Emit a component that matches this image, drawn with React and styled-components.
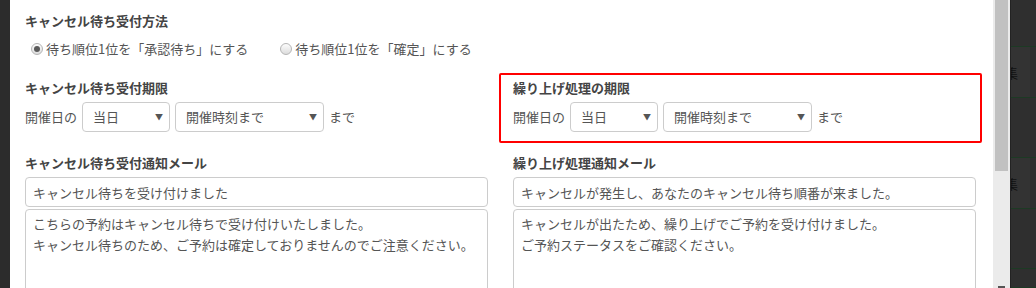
import styled, { createGlobalStyle } from 'styled-components';

const GlobalStyle = createGlobalStyle`
  html, body { margin: 0; padding: 0; background: #2f2f2f; overflow: hidden; }
  * { box-sizing: border-box; }
`;

const FONT = `"Noto Sans CJK JP", "Noto Sans", sans-serif`;

function Radio({ checked, label }) {
  return (
    <RadioItem>
      <RadioDot checked={checked} />
      <span>{label}</span>
    </RadioItem>
  );
}

function Select({ value, width }) {
  return (
    <SelectBox width={width}>
      <span>{value}</span>
      <Caret>▼</Caret>
    </SelectBox>
  );
}

function DeadlineRow() {
  return (
    <InlineRow>
      <span>開催日の</span>
      <Select value="当日" width={88} />
      <Select value="開催時刻まで" width={149} />
      <span>まで</span>
    </InlineRow>
  );
}

function App() {
  return (
    <>
      <GlobalStyle />
      <Screen>
        <LeftEdge />
        <Modal>
          <Heading>キャンセル待ち受付方法</Heading>
          <RadioGroup>
            <Radio checked label="待ち順位1位を「承認待ち」にする" />
            <Radio label="待ち順位1位を「確定」にする" />
          </RadioGroup>

          <FormGrid>
            <Field>
              <Heading>キャンセル待ち受付期限</Heading>
              <DeadlineRow />
            </Field>
            <Field highlight>
              <Highlight />
              <Heading>繰り上げ処理の期限</Heading>
              <DeadlineRow />
            </Field>

            <Field>
              <Heading>キャンセル待ち受付通知メール</Heading>
              <TextInput>キャンセル待ちを受け付けました</TextInput>
              <TextArea>
                こちらの予約はキャンセル待ちで受け付けいたしました。
                <br />
                キャンセル待ちのため、ご予約は確定しておりませんのでご注意ください。
              </TextArea>
            </Field>
            <Field>
              <Heading>繰り上げ処理通知メール</Heading>
              <TextInput>キャンセルが発生し、あなたのキャンセル待ち順番が来ました。</TextInput>
              <TextArea>
                キャンセルが出たため、繰り上げでご予約を受け付けました。
                <br />
                ご予約ステータスをご確認ください。
              </TextArea>
            </Field>
          </FormGrid>
        </Modal>

        <ScrollTrack>
          <ScrollThumb />
          <ScrollArrow />
        </ScrollTrack>

        <BackPage>
          <BackRow h={47} />
          <BackRow h={51} cell>
            <BackGlyph>集</BackGlyph>
          </BackRow>
          <BackRow h={60} />
          <BackRow h={51} cell>
            <BackGlyph>集</BackGlyph>
          </BackRow>
          <BackRow h={60} />
          <BackRow h={19} />
        </BackPage>
      </Screen>
    </>
  );
}

// --- styled-components ---

const Screen = styled.div`
  display: flex;
  width: 1036px; height: 288px;
  overflow: hidden;
  font-family: ${FONT};
`;

const LeftEdge = styled.div`
  width: 10px; flex-shrink: 0;
  background: #2c2c2c;
`;

const Modal = styled.div`
  width: 983px; flex-shrink: 0;
  background: #fff;
  padding: 12px 17px 0 15px;
  color: #555;
  font-size: 13px;
`;

const Heading = styled.div`
  font-size: 13px; line-height: 18px;
  font-weight: bold;
  color: #444;
`;

const RadioGroup = styled.div`
  display: flex; align-items: center;
  gap: 32px;
  margin-top: 9px;
  padding-left: 6px;
  line-height: 20px;
`;

const RadioItem = styled.label`
  display: flex; align-items: center;
  gap: 3px;
`;

const RadioDot = styled.span`
  position: relative;
  width: 12px; height: 12px;
  border-radius: 50%;
  border: 1px solid #b5b5b5;
  background: linear-gradient(#fdfdfd, #dcdcdc);
  &::after {
    content: '';
    display: ${(p) => (p.checked ? 'block' : 'none')};
    position: absolute; left: 2px; top: 2px;
    width: 6px; height: 6px; border-radius: 50%;
    background: #5a5a5a;
  }
`;

const FormGrid = styled.div`
  display: grid;
  grid-template-columns: 463px 463px;
  column-gap: 25px;
  row-gap: 22px;
  margin-top: 20px;
`;

const Field = styled.div`
  position: relative;
  display: flex; flex-direction: column;
  min-width: 0;
`;

const Highlight = styled.div`
  position: absolute;
  top: -6px; left: -14px; right: -6px; bottom: -11px;
  border: 2px solid #f00;
  border-radius: 2px;
  pointer-events: none;
`;

const InlineRow = styled.div`
  display: flex; align-items: center;
  gap: 5px;
  margin-top: 5px;
  line-height: 20px;
`;

const SelectBox = styled.div`
  display: flex; align-items: center; justify-content: space-between;
  width: ${(p) => p.width}px; height: 30px;
  padding: 0 6px 0 10px;
  border: 1px solid #ccc; border-radius: 4px;
  background: #fff;
  color: #555;
`;

const Caret = styled.span`
  font-size: 8px; color: #555;
  line-height: 1;
`;

const TextInput = styled.div`
  height: 30px;
  margin-top: 5px;
  padding: 0 7px;
  display: flex; align-items: center;
  border: 1px solid #ccc; border-radius: 4px;
  white-space: nowrap; overflow: hidden;
`;

const TextArea = styled.div`
  height: 110px;
  margin-top: 2px;
  padding: 3px 7px;
  border: 1px solid #ccc; border-radius: 4px;
  line-height: 21px;
  white-space: nowrap;
`;

const ScrollTrack = styled.div`
  width: 17px; flex-shrink: 0;
  display: flex; flex-direction: column; align-items: center;
  justify-content: space-between;
  background: #ebebeb;
`;

const ScrollThumb = styled.div`
  width: 13px; height: 171px;
  background: #c1c1c1;
`;

const ScrollArrow = styled.div`
  width: 7px; height: 2px;
  background: #555;
`;

const BackPage = styled.div`
  flex: 1;
  display: flex; flex-direction: column;
  background: #303030;
  border-left: 1px solid #232323;
  overflow: hidden;
`;

const BackRow = styled.div`
  height: ${(p) => p.h}px; flex-shrink: 0;
  border-bottom: 1px solid #1d3a24;
  background: ${(p) => (p.cell ? '#333' : '#2f2f2f')};
  display: flex; align-items: center;
  box-shadow: ${(p) => (p.cell ? 'inset -6px 0 0 #2f2f2f' : 'none')};
`;

const BackGlyph = styled.span`
  margin-left: -6px;
  font-size: 13px;
  color: #111;
`;

export default App;
